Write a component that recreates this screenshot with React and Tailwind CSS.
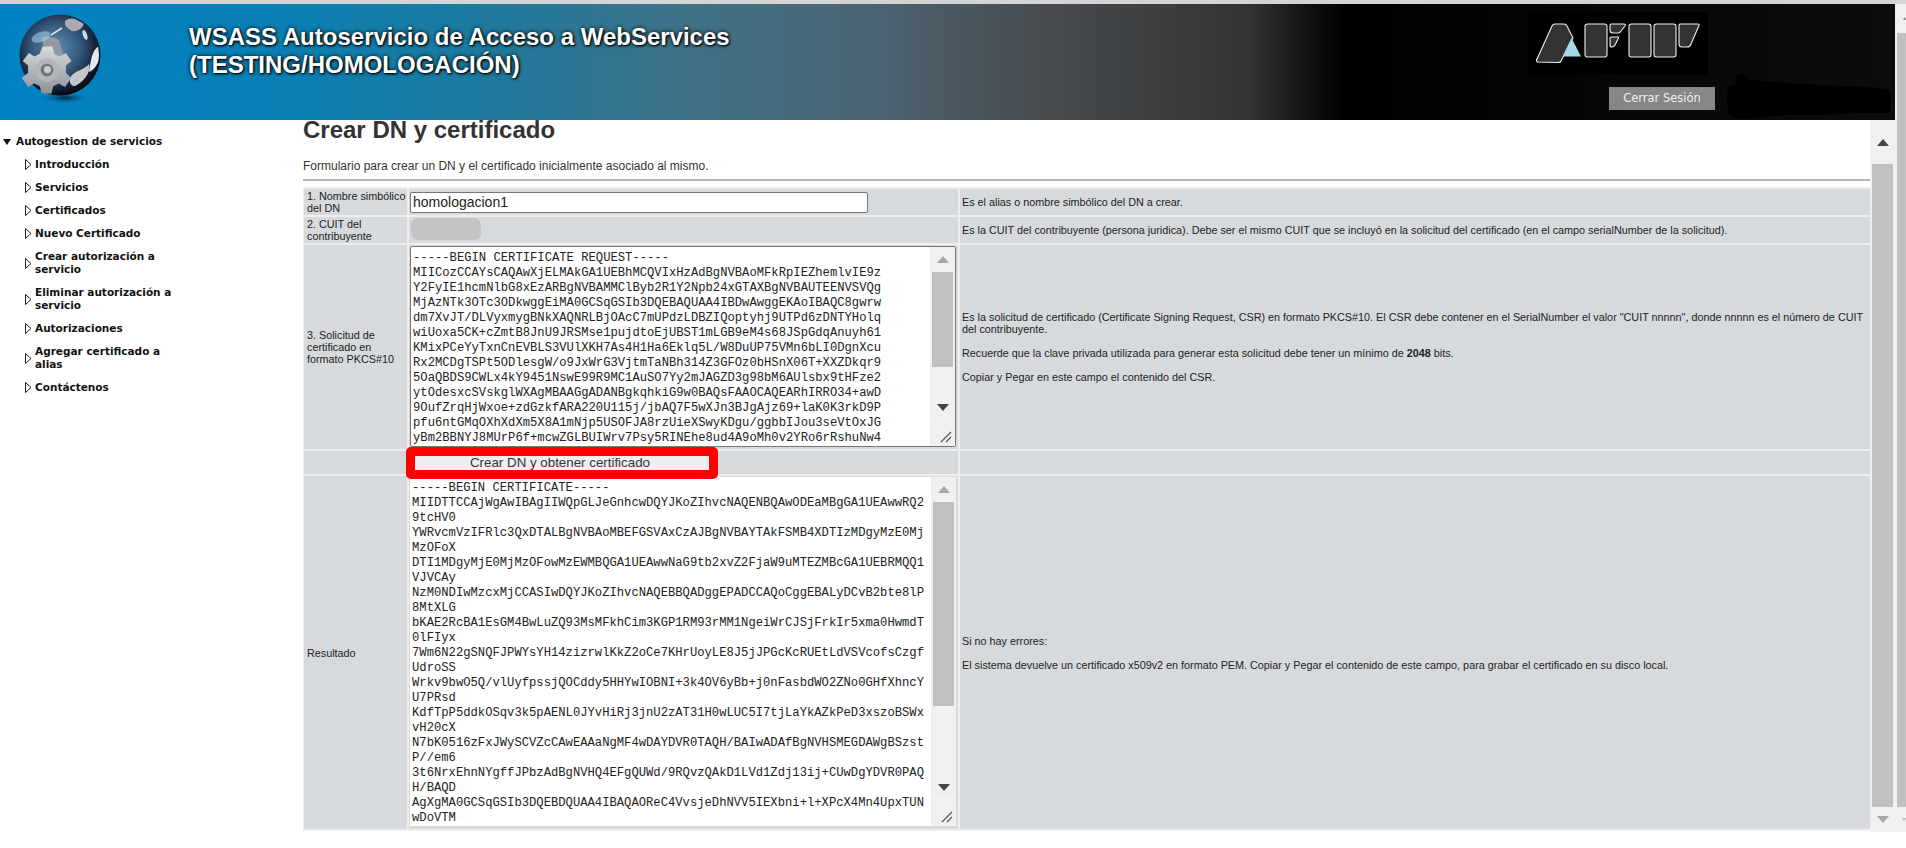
import React from "react";

const csr = `-----BEGIN CERTIFICATE REQUEST-----
MIICozCCAYsCAQAwXjELMAkGA1UEBhMCQVIxHzAdBgNVBAoMFkRpIEZhemlvIE9z
Y2FyIE1hcmNlbG8xEzARBgNVBAMMClByb2R1Y2Npb24xGTAXBgNVBAUTEENVSVQg
MjAzNTk3OTc3ODkwggEiMA0GCSqGSIb3DQEBAQUAA4IBDwAwggEKAoIBAQC8gwrw
dm7XvJT/DLVyxmygBNkXAQNRLBjOAcC7mUPdzLDBZIQoptyhj9UTPd6zDNTYHolq
wiUoxa5CK+cZmtB8JnU9JRSMse1pujdtoEjUBST1mLGB9eM4s68JSpGdqAnuyh61
KMixPCeYyTxnCnEVBLS3VUlXKH7As4H1Ha6Eklq5L/W8DuUP75VMn6bLI0DgnXcu
Rx2MCDgTSPt5ODlesgW/o9JxWrG3VjtmTaNBh314Z3GFOz0bHSnX06T+XXZDkqr9
5OaQBDS9CWLx4kY9451NswE99R9MC1AuSO7Yy2mJAGZD3g98bM6AUlsbx9tHFze2
ytOdesxcSVskglWXAgMBAAGgADANBgkqhkiG9w0BAQsFAAOCAQEARhIRRO34+awD
9OufZrqHjWxoe+zdGzkfARA220U115j/jbAQ7F5wXJn3BJgAjz69+laK0K3rkD9P
pfu6ntGMqOXhXdXm5X8A1mNjp5USOFJA8rzUieXSwyKDgu/ggbbIJou3seVtOxJG
yBm2BBNYJ8MUrP6f+mcwZGLBUIWrv7Psy5RINEhe8ud4A9oMh0v2YRo6rRshuNw4`;

const cert = `-----BEGIN CERTIFICATE-----
MIIDTTCCAjWgAwIBAgIIWQpGLJeGnhcwDQYJKoZIhvcNAQENBQAwODEaMBgGA1UEAwwRQ2
9tcHV0
YWRvcmVzIFRlc3QxDTALBgNVBAoMBEFGSVAxCzAJBgNVBAYTAkFSMB4XDTIzMDgyMzE0Mj
MzOFoX
DTI1MDgyMjE0MjMzOFowMzEWMBQGA1UEAwwNaG9tb2xvZ2FjaW9uMTEZMBcGA1UEBRMQQ1
VJVCAy
NzM0NDIwMzcxMjCCASIwDQYJKoZIhvcNAQEBBQADggEPADCCAQoCggEBALyDCvB2bte8lP
8MtXLG
bKAE2RcBA1EsGM4BwLuZQ93MsMFkhCim3KGP1RM93rMM1NgeiWrCJSjFrkIr5xma0HwmdT
0lFIyx
7Wm6N22gSNQFJPWYsYH14zizrwlKkZ2oCe7KHrUoyLE8J5jJPGcKcRUEtLdVSVcofsCzgf
UdroSS
Wrkv9bwO5Q/vlUyfpssjQOCddy5HHYwIOBNI+3k4OV6yBb+j0nFasbdWO2ZNo0GHfXhncY
U7PRsd
KdfTpP5ddkOSqv3k5pAENL0JYvHiRj3jnU2zAT31H0wLUC5I7tjLaYkAZkPeD3xszoBSWx
vH20cX
N7bK0516zFxJWySCVZcCAwEAAaNgMF4wDAYDVR0TAQH/BAIwADAfBgNVHSMEGDAWgBSzst
P//em6
3t6NrxEhnNYgffJPbzAdBgNVHQ4EFgQUWd/9RQvzQAkD1LVd1Zdj13ij+CUwDgYDVR0PAQ
H/BAQD
AgXgMA0GCSqGSIb3DQEBDQUAA4IBAQAOReC4VvsjeDhNVV5IEXbni+l+XPcX4Mn4UpxTUN
wDoVTM`;

function Up({ color = "#a8a8a8" }) {
  return (
    <svg width="12" height="7" viewBox="0 0 12 7"><path d="M6 0 L12 7 L0 7 Z" fill={color} /></svg>
  );
}
function Down({ color = "#a8a8a8" }) {
  return (
    <svg width="12" height="7" viewBox="0 0 12 7"><path d="M0 0 L12 0 L6 7 Z" fill={color} /></svg>
  );
}
function Grip() {
  return (
    <svg width="12" height="12" viewBox="0 0 12 12">
      <path d="M1 11 L11 1 M6 11 L11 6" stroke="#555" strokeWidth="1.2" fill="none" />
    </svg>
  );
}

function AreaScrollbar({ topH, thumbH, downColor = "#444" }) {
  return (
    <div className="w-[25px] shrink-0 flex flex-col bg-[#f0f0f0]">
      <div className="flex items-center justify-center" style={{ height: topH }}>
        <Up />
      </div>
      <div className="w-[21px] mx-[2px] bg-[#c0c0c0]" style={{ height: thumbH }} />
      <div className="flex-1 flex flex-col items-center">
        <div className="flex-1" />
        <div className="h-[24px] flex items-center justify-center">
          <Down color={downColor} />
        </div>
        <div className="h-[27px] w-full bg-[#f0f0f0] flex items-end justify-end pr-[3px] pb-[3px] border-t border-[#f6f6f6]">
          <Grip />
        </div>
      </div>
    </div>
  );
}

function Item({ children }) {
  return (
    <li className="flex items-center gap-[3px] pl-[25px]">
      <svg width="7" height="11" viewBox="0 0 7 11" className="shrink-0">
        <path d="M0.5 0.5 L6 5.5 L0.5 10.5 Z" fill="#fff" stroke="#222" strokeWidth="1" />
      </svg>
      <span className="w-[145px]">{children}</span>
    </li>
  );
}

function Globe() {
  return (
    <svg width="90" height="92" viewBox="0 0 90 92" className="shrink-0">
      <defs>
        <radialGradient id="g1" cx="0.45" cy="0.42" r="0.6">
          <stop offset="0" stopColor="#5f8db6" />
          <stop offset="0.5" stopColor="#35597c" />
          <stop offset="0.82" stopColor="#14233a" />
          <stop offset="1" stopColor="#020306" />
        </radialGradient>
        <radialGradient id="g2" cx="0.5" cy="0.5" r="0.5">
          <stop offset="0" stopColor="#04182a" stopOpacity="0.9" />
          <stop offset="1" stopColor="#0080c0" stopOpacity="0" />
        </radialGradient>
        <linearGradient id="g3" x1="0" y1="0" x2="0" y2="1">
          <stop offset="0" stopColor="#d8dadc" />
          <stop offset="1" stopColor="#8e9296" />
        </linearGradient>
        <clipPath id="c1"><circle cx="45" cy="41" r="39" /></clipPath>
      </defs>
      <ellipse cx="50" cy="84" rx="26" ry="6" fill="url(#g2)" />
      <circle cx="45" cy="41" r="40.5" fill="url(#g1)" />
      <g clipPath="url(#c1)">
        <path d="M50 7 C54 3 64 4 69 9 C68 14 63 18 57 17 C53 15 49 12 50 7 Z" fill="#a9adb1" />
        <path d="M27 24 C33 20 40 24 44 26 C46 33 49 40 48 45 C42 44 36 42 30 42 Z" fill="#94999f" />
        <path d="M36 21 L47 14" stroke="#dfe3e6" strokeWidth="1.6" />
        <path d="M84 32 C77 36 76 46 74 58 C80 56 86 46 86 36 Z" fill="#e6e8ea" />
        <path d="M58 60 C63 56 70 55 74 50 C76 55 72 66 60 72 C54 72 53 64 58 60 Z" fill="#c4c8cc" />
        <ellipse cx="26" cy="23" rx="10" ry="5" fill="#a9d3ec" opacity="0.55" transform="rotate(-20 26 23)" />
        <ellipse cx="70" cy="21" rx="2" ry="5" fill="#d7f0ff" opacity="0.9" transform="rotate(-20 70 21)" />
      </g>
      <g transform="translate(32 56) scale(0.9)">
        <path
          d="M-5 -26 L6 -26 L8 -18 L14 -15 L21 -19 L27 -10 L21 -5 L21 3 L27 9 L20 19 L13 15 L7 18 L5 26 L-6 26 L-8 18 L-14 15 L-21 19 L-28 9 L-21 3 L-21 -5 L-27 -10 L-20 -19 L-14 -15 L-8 -18 Z"
          fill="url(#g3)"
        />
        <circle r="13" fill="#b2b6ba" />
        <circle r="7" fill="#6f7478" />
        <circle cx="0.5" cy="-0.5" r="4" fill="#c8ccd0" />
      </g>
    </svg>
  );
}

function AfipLogo() {
  const s = { stroke: "#eee", strokeWidth: 1.1, strokeLinejoin: "round", fill: "#333" };
  return (
    <svg width="180" height="63" viewBox="0 0 180 63" className="block bg-black">
      <path d="M9 50 Q8 47.5 9.5 46 L24 14 Q25 12 27 12 L36 12 Q38 12 39 14 L45 26 L33 49 Q32.5 50.5 30 50.5 Z" {...s} />
      <path d="M43.5 26 L53 44.5 L34.5 44.5 Z" fill="#a5d9ea" />
      <rect x="57" y="12" width="22" height="33" rx="2.5" {...s} />
      <path d="M83 12 L96 12 Q98 12 97 14 L93 19 Q92 21 90 21 L85 21 Q82 21 82 18 L82 13 Q82 12 83 12 Z" {...s} />
      <path d="M83 25 L90 25 Q91 25 90.5 26 L87 33 Q86 35 84 35 Q82 35 82 33 L82 26 Q82 25 83 25 Z" {...s} />
      <rect x="101" y="12" width="22" height="33" rx="2.5" {...s} />
      <rect x="126" y="12" width="22" height="33" rx="2.5" {...s} />
      <path d="M152 12 L170 12 Q171.5 12 171 13.5 L163 32 Q162 35 159 35 L154 35 Q151 35 151 32 L151 13 Q151 12 152 12 Z" {...s} />
    </svg>
  );
}

function Cell({ className = "", children }) {
  return <div className={"bg-[#d6dadd] " + className}>{children}</div>;
}

export default function App() {
  const labelCls = "flex items-center pl-[3px] leading-[12px] text-[10.8px]";
  const descCls = "flex items-center pl-[2px] pr-[1px] leading-[12px] text-[10.8px]";
  return (
    <div className="w-[1906px] h-[848px] overflow-hidden bg-white text-[11px] text-[#222] font-['Liberation_Sans',Arial,sans-serif]">
      <div className="h-[4px] bg-[#d4d4d4]" />
      <div className="flex h-[828px]">
        <div className="w-[1895px] flex flex-col">
          <header className="relative h-[116px] shrink-0 flex bg-[linear-gradient(90deg,#0082c4_0%,#0a80b6_14%,#1c7a9f_25%,#3f7288_36%,#4c6473_46%,#484c50_55%,#333333_66%,#111111_69%,#000000_71%,#0d0d0d_100%)]">
            <div className="w-[189px] pl-[15px] pt-[10px] shrink-0">
              <Globe />
            </div>
            <h1 className="pt-[19px] text-[24px] leading-[28px] font-bold text-white [text-shadow:0_0_4px_#000,1px_1px_2px_#000]">
              WSASS Autoservicio de Acceso a WebServices
              <br />
              (TESTING/HOMOLOGACIÓN)
            </h1>
            <div className="absolute left-[1528px] top-[8px] flex flex-col">
              <AfipLogo />
              <div className="mt-[12px] ml-[81px] w-[106px] h-[23px] bg-[#868686] text-[#efefef] text-[11.5px] flex items-center justify-center font-['DejaVu_Sans',sans-serif]">
                Cerrar Sesión
              </div>
            </div>
            <svg className="absolute left-[1725px] top-[67px]" width="170" height="49" viewBox="0 0 170 49">
              <path
                d="M3 16 L10 14 L12 4 L18 3 L25 9 L60 12 L100 14 L140 16 L164 18 L166 28 L165 42 L130 42 L100 44 L60 44 L40 46 L14 48 L3 42 L2 28 Z"
                fill="#000"
              />
            </svg>
          </header>

          <div className="flex flex-1 min-h-0">
            <nav className="w-[303px] shrink-0 pt-[15px] text-[10.5px] font-bold leading-[13px] text-[#111] font-['DejaVu_Sans',sans-serif]">
              <div className="flex items-center gap-[5px] pl-[3px] h-[13px]">
                <svg width="8" height="6" viewBox="0 0 8 6"><path d="M0 0 L8 0 L4 6 Z" fill="#111" /></svg>
                <span>Autogestion de servicios</span>
              </div>
              <ul className="mt-[10px] flex flex-col gap-[10px]">
                <Item>Introducción</Item>
                <Item>Servicios</Item>
                <Item>Certificados</Item>
                <Item>Nuevo Certificado</Item>
                <Item>Crear autorización a servicio</Item>
                <Item>Eliminar autorización a servicio</Item>
                <Item>Autorizaciones</Item>
                <Item>Agregar certificado a alias</Item>
                <Item>Contáctenos</Item>
              </ul>
            </nav>

            <main className="w-[1567px] shrink-0 overflow-hidden">
              <h2 className="-mt-[5px] h-[29px] text-[24px] leading-[29px] font-bold text-[#333]">Crear DN y certificado</h2>
              <p className="mt-[15px] text-[12px] leading-[14px] text-[#333]">
                Formulario para crear un DN y el certificado inicialmente asociado al mismo.
              </p>
              <div className="mt-[6px] h-[2px] bg-[#b4b4b4]" />
              <div className="mt-[6px] grid grid-cols-[103px_549px_910px] grid-rows-[26px_26px_204px_23px_353px] gap-[2px] p-[1px] py-[2px] w-[1567px] bg-[#eeeeee]">
                <Cell className={labelCls}>
                  <div>
                    <span className="whitespace-nowrap">1. Nombre simbólico</span>
                    <br />
                    del DN
                  </div>
                </Cell>
                <Cell className="pl-[1px] pt-[3px]">
                  <div className="w-[458px] h-[21px] bg-white border border-[#767676] rounded-[2px] flex items-center px-[2px] text-[14px] text-[#222]">
                    homologacion1
                  </div>
                </Cell>
                <Cell className={descCls}>Es el alias o nombre simbólico del DN a crear.</Cell>

                <Cell className={labelCls}>2. CUIT del contribuyente</Cell>
                <Cell className="pl-[2px] pt-[1px]">
                  <div className="w-[70px] h-[22px] rounded-[7px] bg-[#c4c4c4]" />
                </Cell>
                <Cell className={descCls}>
                  Es la CUIT del contribuyente (persona juridica). Debe ser el mismo CUIT que se incluyó en la solicitud del certificado (en el campo serialNumber de la solicitud).
                </Cell>

                <Cell className={labelCls}>3. Solicitud de certificado en formato PKCS#10</Cell>
                <Cell className="pl-[1px] pt-[1px]">
                  <div className="w-[546px] h-[201px] bg-white border border-[#767676] rounded-[2px] flex overflow-hidden">
                    <pre className="flex-1 pl-[2px] pt-[4px] text-[12.2px] leading-[15px] text-[#222] font-['Liberation_Mono',monospace]">{csr}</pre>
                    <AreaScrollbar topH={25} thumbH={95} />
                  </div>
                </Cell>
                <Cell className={descCls}>
                  <div>
                    Es la solicitud de certificado (Certificate Signing Request, CSR) en formato PKCS#10. El CSR debe contener en el SerialNumber el valor "CUIT nnnnn", donde nnnnn es el número de CUIT del contribuyente.
                    <br />
                    <br />
                    Recuerde que la clave privada utilizada para generar esta solicitud debe tener un mínimo de <b>2048</b> bits.
                    <br />
                    <br />
                    Copiar y Pegar en este campo el contenido del CSR.
                  </div>
                </Cell>

                <Cell />
                <Cell className="pl-[6px] flex items-center">
                  <div className="relative z-10 -m-[9px] border-[9px] border-[#ff0000] rounded-[5px]">
                    <button className="block w-[294px] h-[14px] bg-[#efefef] text-[13.33px] leading-[14px] text-[#333] pr-[4px]">
                      Crear DN y obtener certificado
                    </button>
                  </div>
                </Cell>
                <Cell />

                <Cell className={labelCls}>Resultado</Cell>
                <Cell className="pl-[1px] pt-[1px]">
                  <div className="w-[546px] h-[349px] bg-white flex overflow-hidden">
                    <pre className="flex-1 pl-[2px] pt-[4px] text-[12.2px] leading-[15px] text-[#222] font-['Liberation_Mono',monospace]">{cert}</pre>
                    <AreaScrollbar topH={25} thumbH={204} />
                  </div>
                </Cell>
                <Cell className={descCls}>
                  <div>
                    Si no hay errores:
                    <br />
                    <br />
                    El sistema devuelve un certificado x509v2 en formato PEM. Copiar y Pegar el contenido de este campo, para grabar el certificado en su disco local.
                  </div>
                </Cell>
              </div>
            </main>

            <div className="w-[25px] shrink-0 bg-[#f0f0f0] flex flex-col">
              <div className="h-[44px] flex items-center justify-center">
                <Up color="#444" />
              </div>
              <div className="h-[643px] w-[21px] mx-[2px] bg-[#c0c0c0]" />
              <div className="flex-1 flex items-center justify-center">
                <Down />
              </div>
            </div>
          </div>
        </div>

        <div className="w-[11px] shrink-0 bg-[#f0f0f0] overflow-hidden flex flex-col">
          <div className="h-[29px] pl-[8px] flex items-center">
            <Up color="#444" />
          </div>
          <div className="h-[774px] ml-[2px] bg-[#c0c0c0]" />
          <div className="flex-1 pl-[7px] flex items-center">
            <Down />
          </div>
        </div>
      </div>
    </div>
  );
}
